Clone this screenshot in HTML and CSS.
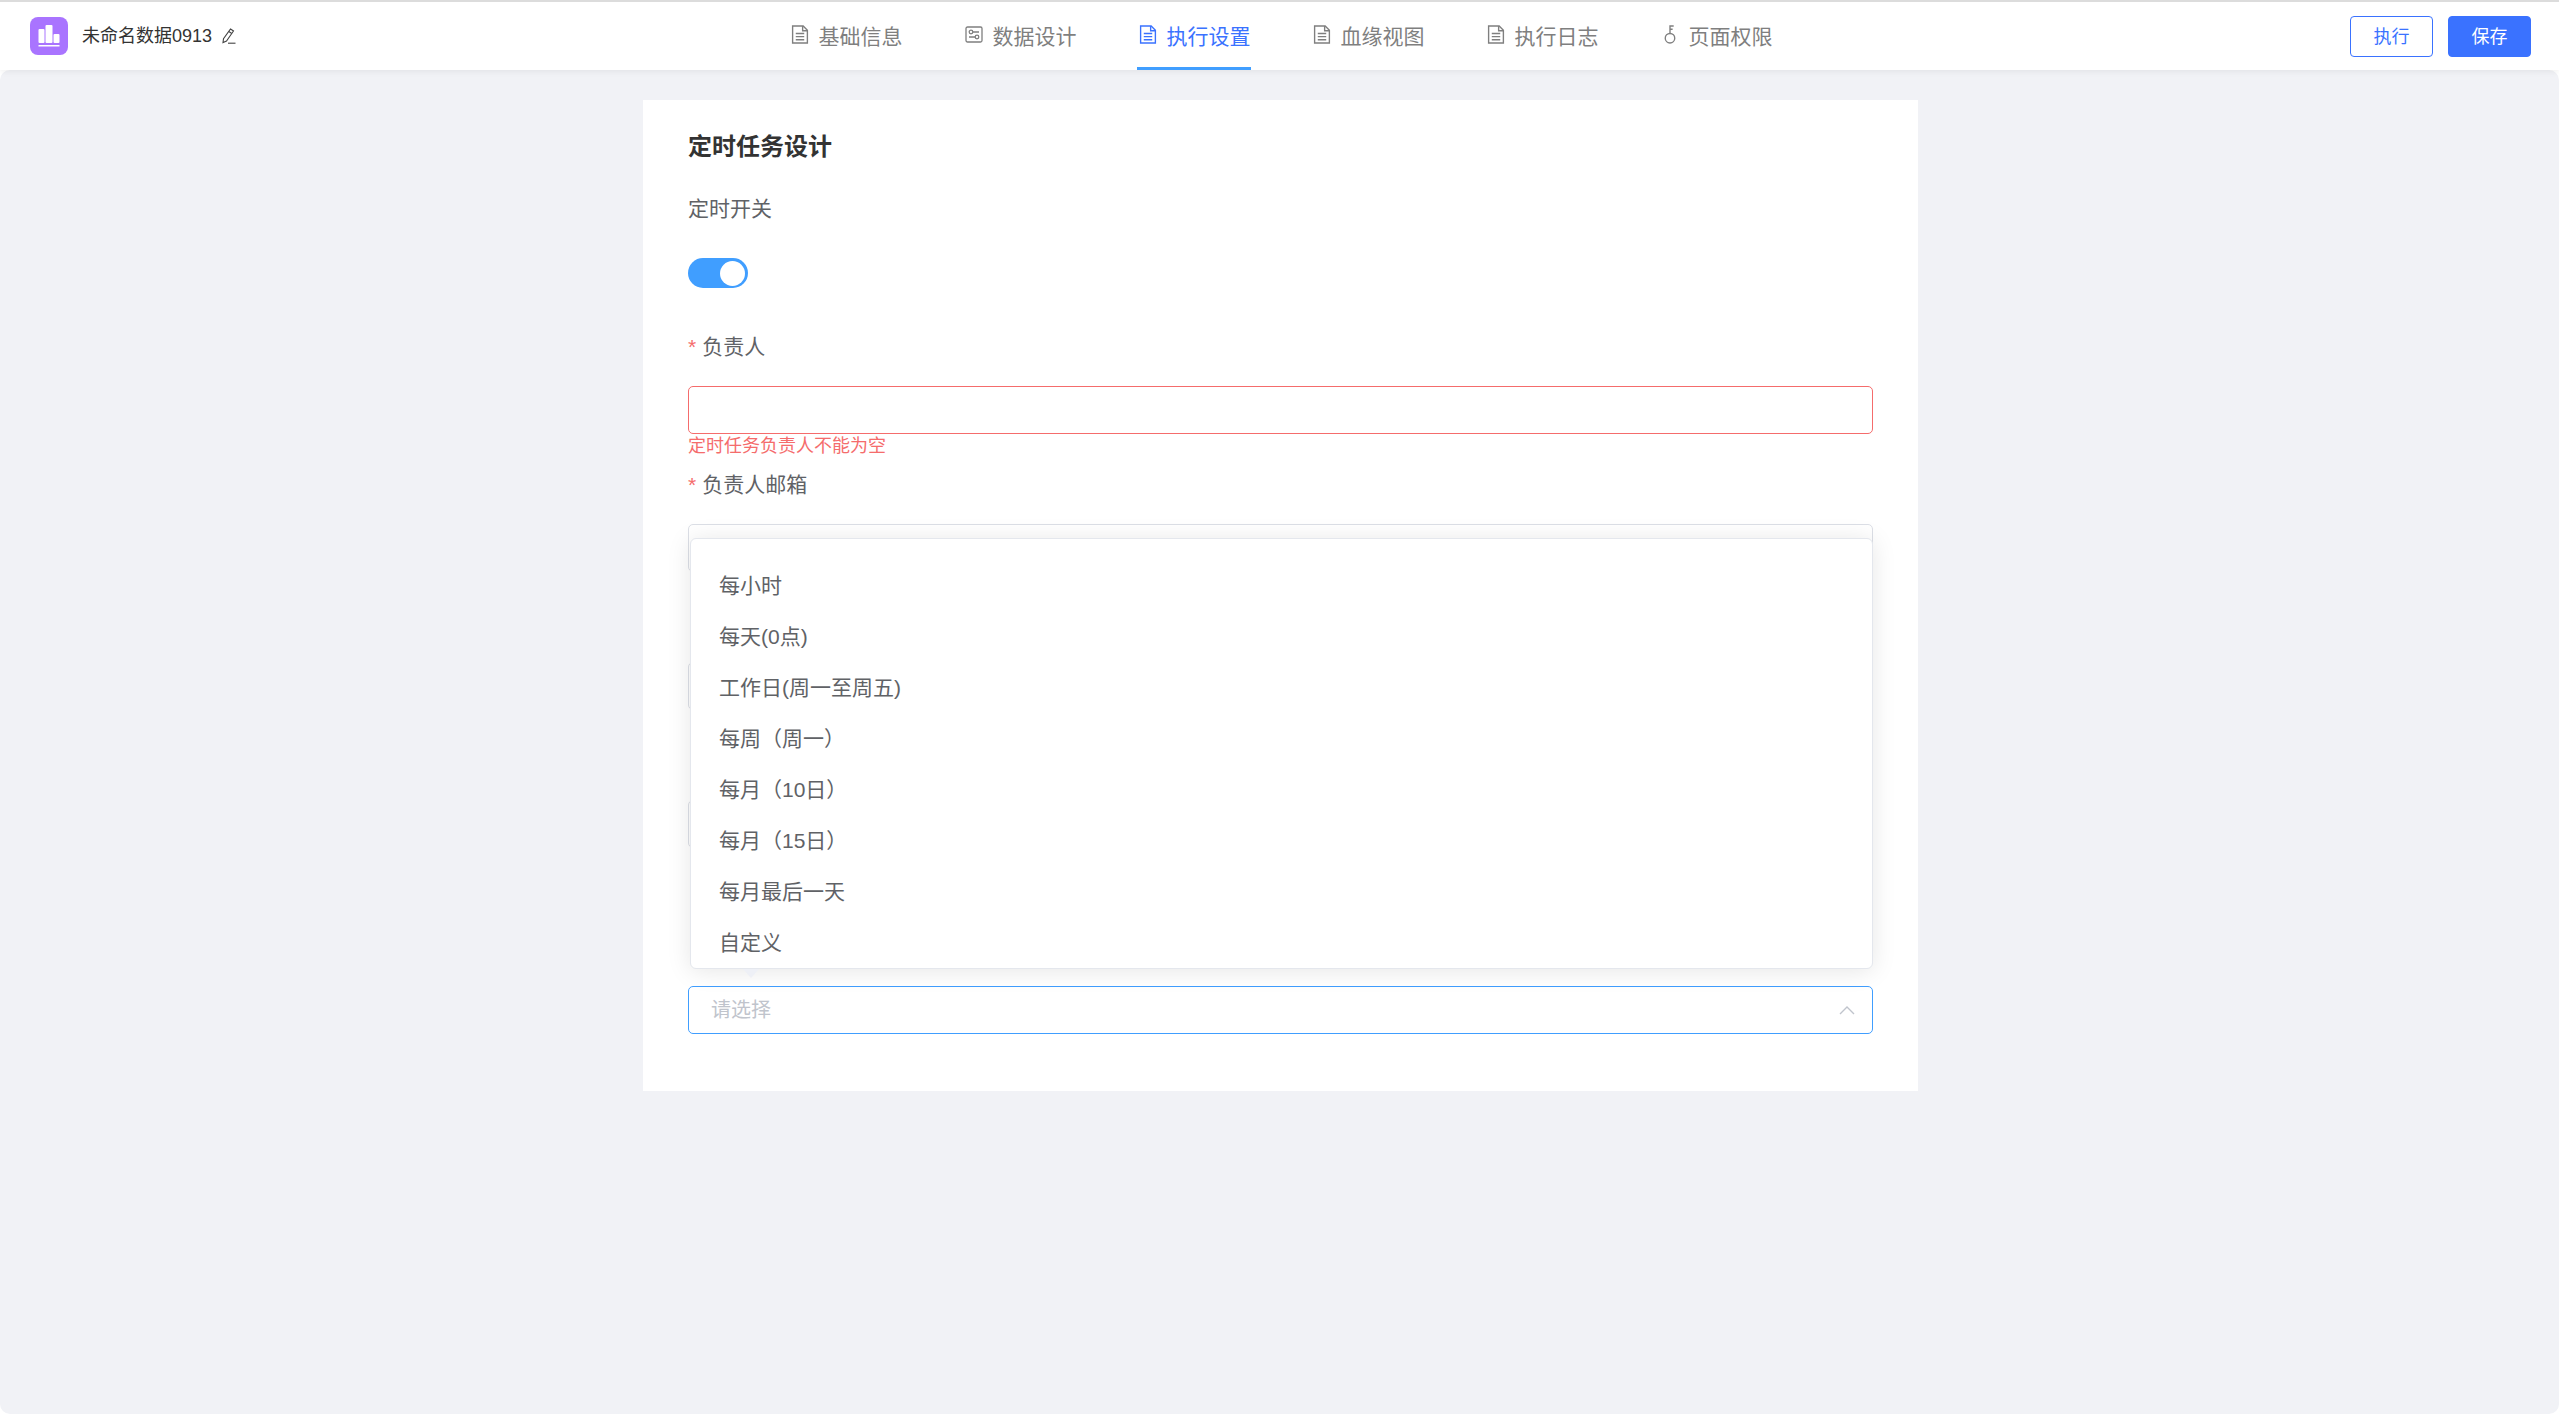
FILE: index.html
```html
<!DOCTYPE html>
<html lang="zh-CN">
<head>
<meta charset="utf-8">
<title>未命名数据0913</title>
<link rel="stylesheet" href="styles.css">
</head>
<body>
<header class="topbar">
  <div class="brand">
    <svg class="logo" viewBox="0 0 38 38" width="38" height="38">
      <rect width="38" height="38" rx="8" fill="#a974ff"/>
      <rect x="8.500" y="12" width="6" height="14" rx="1" fill="#fff"/>
      <rect x="15.500" y="8" width="7" height="18" rx="1" fill="#fff"/>
      <rect x="23.500" y="17" width="6" height="9" rx="1" fill="#fff"/>
      <rect x="8.500" y="28" width="21" height="1.500" fill="#fff"/>
    </svg>
    <span class="brand-name">未命名数据0913</span>
    <svg class="pencil" viewBox="0 0 16 16" width="16" height="16" fill="none" stroke="#444" stroke-width="1.100">
      <path d="M10.500 1l3 2-7 10-3.500 1.500.5-3.700z"/>
      <path d="M8.800 3.500l3 2"/>
      <path d="M8 15.200h7.500"/>
    </svg>
  </div>
  <nav class="tabs">
    <a class="tab">
      <svg class="tab-icon" viewBox="0 0 16 18" fill="none" stroke="currentColor" stroke-width="1.300"><path d="M1 1h10l4 4v12H1z"/><path d="M10.500 1v4.500H15M4 8h8M4 11h8M4 14h8"/></svg>
      <span>基础信息</span>
    </a>
    <a class="tab">
      <svg class="tab-icon" viewBox="0 0 18 18" fill="none" stroke="currentColor" stroke-width="1.300"><rect x="1" y="1.500" width="16" height="15" rx="1.500"/><circle cx="6" cy="6.500" r="1.800"/><path d="M8 6.500h6M4 11.500h6"/><circle cx="12" cy="11.500" r="1.800"/></svg>
      <span>数据设计</span>
    </a>
    <a class="tab tab-active">
      <svg class="tab-icon" viewBox="0 0 16 18" fill="none" stroke="currentColor" stroke-width="1.300"><path d="M1 1h10l4 4v12H1z"/><path d="M10.500 1v4.500H15M4 8h8M4 11h8M4 14h8"/></svg>
      <span>执行设置</span>
    </a>
    <a class="tab">
      <svg class="tab-icon" viewBox="0 0 16 18" fill="none" stroke="currentColor" stroke-width="1.300"><path d="M1 1h10l4 4v12H1z"/><path d="M10.500 1v4.500H15M4 8h8M4 11h8M4 14h8"/></svg>
      <span>血缘视图</span>
    </a>
    <a class="tab">
      <svg class="tab-icon" viewBox="0 0 16 18" fill="none" stroke="currentColor" stroke-width="1.300"><path d="M1 1h10l4 4v12H1z"/><path d="M10.500 1v4.500H15M4 8h8M4 11h8M4 14h8"/></svg>
      <span>执行日志</span>
    </a>
    <a class="tab">
      <svg class="tab-icon" viewBox="0 0 16 18" fill="none" stroke="currentColor" stroke-width="1.300"><circle cx="8" cy="12.500" r="4.500"/><path d="M8 8V1h3.500M8 4h2.500"/></svg>
      <span>页面权限</span>
    </a>
  </nav>
  <div class="actions">
    <button class="btn btn-outline" type="button">执行</button>
    <button class="btn btn-primary" type="button">保存</button>
  </div>
</header>
<main class="main">
  <section class="card">
    <h2 class="card-title">定时任务设计</h2>
    <div class="field">
      <div class="label">定时开关</div>
      <div class="control"><span class="switch"><span class="knob"></span></span></div>
    </div>
    <div class="field">
      <div class="label required">负责人</div>
      <div class="input input-error"></div>
      <div class="error">定时任务负责人不能为空</div>
    </div>
    <div class="field">
      <div class="label required">负责人邮箱</div>
      <div class="input"></div>
    </div>
    <div class="field">
      <div class="label"></div>
      <div class="input"></div>
    </div>
    <div class="field field-tall">
      <div class="label"></div>
      <div class="input"></div>
    </div>
    <div class="field field-last">
      <div class="label"></div>
      <div class="input input-focus">
        <span class="placeholder">请选择</span>
        <svg class="chevron" viewBox="0 0 16 10" width="16" height="10" fill="none" stroke="#c0c4cc" stroke-width="1.400"><path d="M1 9l7-7 7 7"/></svg>
      </div>
    </div>
    <div class="popover">
      <ul class="options">
        <li class="option">每小时</li>
        <li class="option">每天(0点)</li>
        <li class="option">工作日(周一至周五)</li>
        <li class="option">每周（周一）</li>
        <li class="option">每月（10日）</li>
        <li class="option">每月（15日）</li>
        <li class="option">每月最后一天</li>
        <li class="option">自定义</li>
      </ul>
      <span class="arrow"></span>
    </div>
  </section>
</main>
</body>
</html>
```

FILE: styles.css
```css
* { box-sizing: border-box; }
html, body { margin: 0; height: 100%; }
body {
  display: flex;
  flex-direction: column;
  height: 1414px;
  overflow: hidden;
  background: #fff;
  border-top: 2px solid #dcdcdc;
  font-family: "Liberation Sans", "Noto Sans CJK SC", sans-serif;
  color: #606266;
}
.topbar {
  position: relative;
  z-index: 2;
  flex: none;
  height: 68px;
  display: grid;
  grid-template-columns: 1fr auto 1fr;
  align-items: center;
  padding: 0 28px 0 30px;
  background: #fff;
  box-shadow: 0 2px 6px rgba(0, 0, 0, 0.06);
}
.brand { display: flex; align-items: center; }
.logo { flex: none; }
.brand-name { margin-left: 14px; font-size: 18px; line-height: 24px; color: #333; }
.pencil { margin-left: 8px; }
.tabs { display: flex; gap: 60px; height: 100%; }
.tab {
  display: flex;
  align-items: center;
  gap: 10px;
  height: 100%;
  padding-left: 2px;
  border-bottom: 3px solid transparent;
  font-size: 21px;
  color: #7f7f7f;
}
.tab-icon { flex: none; width: 18px; height: 19px; }
.tab-active { color: #3a72ff; border-bottom-color: #409eff; }
.actions { display: flex; justify-content: flex-end; gap: 15px; }
.btn {
  width: 83px;
  height: 41px;
  padding: 0 0 2px;
  border: 1px solid #3a72ff;
  border-radius: 4px;
  font: inherit;
  font-size: 18px;
}
.btn-outline { background: #fff; color: #3a72ff; }
.btn-primary { background: #3a72ff; color: #fff; }
.main {
  flex: 1;
  display: flex;
  justify-content: center;
  align-items: flex-start;
  padding: 30px 0 0 2px;
  background: #f1f2f6;
  border-radius: 10px;
}
.card {
  position: relative;
  width: 1275px;
  height: 991px;
  padding: 31px 45px 0;
  background: #fff;
}
.card-title {
  height: 30px;
  margin: 0 0 32px;
  font-size: 24px;
  line-height: 32px;
  font-weight: 700;
  color: #333;
}
.field { height: 138px; }
.field-tall { height: 186px; }
.field-last { height: 103px; }
.label {
  height: 30px;
  margin-bottom: 25px;
  font-size: 21px;
  line-height: 32px;
  color: #606266;
}
.required::before {
  content: "*";
  margin-right: 6px;
  color: #f56c6c;
}
.control { height: 48px; display: flex; align-items: center; padding-top: 2px; }
.switch {
  display: flex;
  justify-content: flex-end;
  align-items: center;
  width: 60px;
  height: 30px;
  padding-right: 3px;
  border-radius: 15px;
  background: #409eff;
}
.knob { width: 25px; height: 25px; border-radius: 50%; background: #fff; }
.input {
  display: flex;
  align-items: center;
  justify-content: space-between;
  height: 48px;
  padding: 0 17px 0 22px;
  border: 1px solid #dcdfe6;
  border-radius: 5px;
  background: #fff;
}
.input-error { border-color: #f56c6c; }
.input-focus { border-color: #409eff; }
.error { font-size: 18px; line-height: 24px; color: #f56c6c; }
.placeholder { font-size: 20px; line-height: 26px; color: #c0c4cc; }
.popover {
  position: absolute;
  top: 438px;
  left: 47px;
  right: 45px;
  padding-top: 21px;
  background: #fff;
  border: 1px solid #e4e7ed;
  border-radius: 6px;
  box-shadow: 0 2px 24px rgba(0, 0, 0, 0.1);
}
.options { margin: 0; padding: 0; list-style: none; }
.option {
  height: 51px;
  padding-left: 28px;
  font-size: 21px;
  line-height: 52px;
  color: #606266;
}
.arrow {
  position: absolute;
  left: 52px;
  bottom: -10px;
  width: 0;
  height: 0;
  border-style: solid;
  border-width: 9px 8px 0;
  border-color: #eef0f6 transparent transparent;
}
```
